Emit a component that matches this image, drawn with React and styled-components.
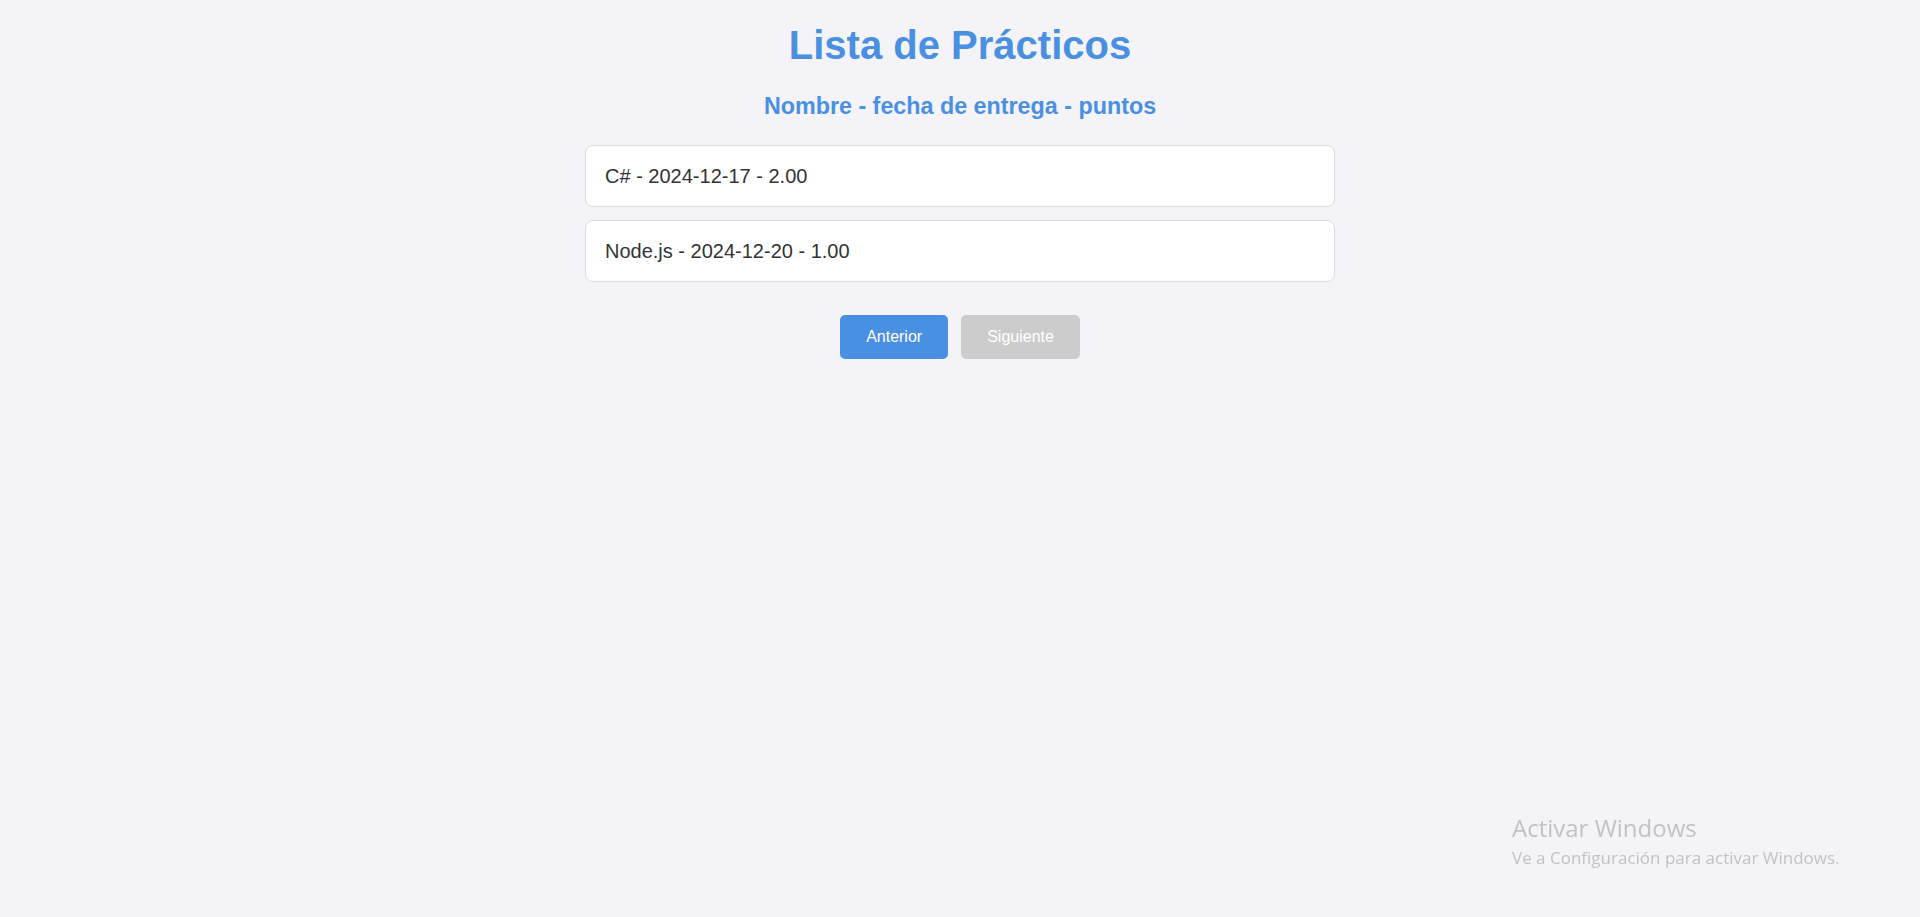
import React, { useState } from 'react';
import styled, { createGlobalStyle } from 'styled-components';

const GlobalStyle = createGlobalStyle`
  html, body {
    margin: 0;
    padding: 0;
    background: #f4f4f8;
    font-family: 'Liberation Sans', Arial, sans-serif;
  }
  #root {
    min-height: 917px;
  }
`;

const practicos = [
  { id: 1, nombre: 'C#', fecha: '2024-12-17', puntos: '2.00' },
  { id: 2, nombre: 'Node.js', fecha: '2024-12-20', puntos: '1.00' },
];

const App = () => {
  const [page, setPage] = useState(1);
  const lastPage = 1;

  return (
    <>
      <GlobalStyle />
      <Wrapper>
        <Title>Lista de Prácticos</Title>
        <Subtitle>Nombre - fecha de entrega - puntos</Subtitle>
        <List>
          {practicos.map((item) => (
            <Item key={item.id}>
              {item.nombre} - {item.fecha} - {item.puntos}
            </Item>
          ))}
        </List>
        <Pagination>
          <PageButton onClick={() => setPage(page - 1)}>Anterior</PageButton>
          <PageButton disabled={page >= lastPage} onClick={() => setPage(page + 1)}>
            Siguiente
          </PageButton>
        </Pagination>
      </Wrapper>
      <Watermark>
        <h4>Activar Windows</h4>
        <p>Ve a Configuración para activar Windows.</p>
      </Watermark>
    </>
  );
};

const Wrapper = styled.main`
  display: flex;
  flex-direction: column;
  align-items: center;
  padding-top: 22px;
`;

const Title = styled.h1`
  margin: 0;
  font-size: 40px;
  line-height: 46px;
  font-weight: 700;
  color: #4a90e2;
`;

const Subtitle = styled.h2`
  margin: 25px 0 0;
  font-size: 23.3px;
  line-height: 27px;
  font-weight: 700;
  color: #4a90e2;
`;

const List = styled.ul`
  list-style: none;
  margin: 25px 0 0;
  padding: 0;
  width: 750px;
  display: flex;
  flex-direction: column;
  gap: 13px;
`;

const Item = styled.li`
  background: #fff;
  border: 1px solid #dcdce0;
  border-radius: 8px;
  padding: 19px 19px;
  font-size: 20px;
  line-height: 22px;
  color: #333;
`;

const Pagination = styled.div`
  margin-top: 33px;
  display: flex;
  gap: 13px;
`;

const PageButton = styled.button`
  height: 44px;
  padding: 0 26px;
  border: none;
  border-radius: 5px;
  font-family: 'Liberation Sans', Arial, sans-serif;
  font-size: 16px;
  color: #fff;
  background: #4a90e2;
  cursor: pointer;

  &:disabled {
    background: #cccccc;
    cursor: not-allowed;
  }
`;

const Watermark = styled.div`
  position: fixed;
  left: 1512px;
  top: 812px;
  color: #c2c2c6;
  font-family: 'Open Sans', 'Noto Sans', sans-serif;
  pointer-events: none;

  h4 {
    margin: 0;
    font-size: 24px;
    line-height: 32px;
    font-weight: 400;
  }
  p {
    margin: 2px 0 0;
    font-size: 17px;
    line-height: 24px;
  }
`;

export default App;
